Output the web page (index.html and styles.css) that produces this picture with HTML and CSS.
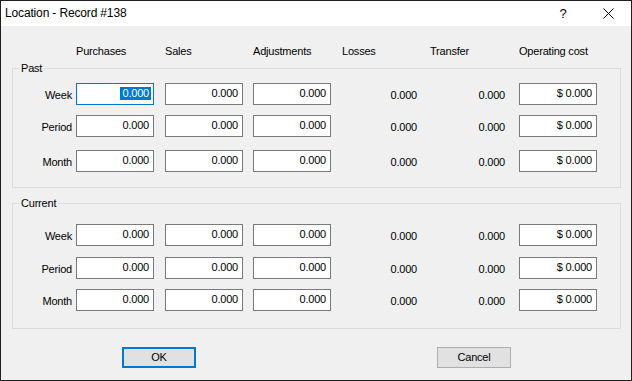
FILE: index.html
```html
<!DOCTYPE html>
<html>
<head>
<meta charset="utf-8">
<title>Location - Record #138</title>
<link rel="stylesheet" href="styles.css">
</head>
<body>
<div class="window">
  <div class="titlebar">
    <span class="title">Location - Record #138</span>
    <div class="caps">
      <span class="cap help">?</span>
      <span class="cap close"><svg width="11" height="11" viewBox="0 0 11 11"><path d="M0.5 0.5 L10.5 10.5 M10.5 0.5 L0.5 10.5" stroke="#000" stroke-width="1" fill="none"/></svg></span>
    </div>
  </div>
  <div class="content">
    <div class="cols headers">
      <span></span>
      <span class="hdr">Purchases</span>
      <span class="hdr">Sales</span>
      <span class="hdr">Adjustments</span>
      <span class="hdr">Losses</span>
      <span class="hdr">Transfer</span>
      <span class="hdr">Operating cost</span>
    </div>

    <fieldset class="group past">
      <legend>Past</legend>
      <div class="cols rows">
        <span class="lbl">Week</span>
        <div class="edit focus"><span class="sel">0.000</span></div>
        <div class="edit">0.000</div>
        <div class="edit">0.000</div>
        <span class="val">0.000</span>
        <span class="val">0.000</span>
        <div class="edit">$ 0.000</div>

        <span class="lbl">Period</span>
        <div class="edit">0.000</div>
        <div class="edit">0.000</div>
        <div class="edit">0.000</div>
        <span class="val">0.000</span>
        <span class="val">0.000</span>
        <div class="edit">$ 0.000</div>

        <span class="lbl">Month</span>
        <div class="edit">0.000</div>
        <div class="edit">0.000</div>
        <div class="edit">0.000</div>
        <span class="val">0.000</span>
        <span class="val">0.000</span>
        <div class="edit">$ 0.000</div>
      </div>
    </fieldset>

    <fieldset class="group current">
      <legend>Current</legend>
      <div class="cols rows">
        <span class="lbl">Week</span>
        <div class="edit">0.000</div>
        <div class="edit">0.000</div>
        <div class="edit">0.000</div>
        <span class="val">0.000</span>
        <span class="val">0.000</span>
        <div class="edit">$ 0.000</div>

        <span class="lbl">Period</span>
        <div class="edit">0.000</div>
        <div class="edit">0.000</div>
        <div class="edit">0.000</div>
        <span class="val">0.000</span>
        <span class="val">0.000</span>
        <div class="edit">$ 0.000</div>

        <span class="lbl">Month</span>
        <div class="edit">0.000</div>
        <div class="edit">0.000</div>
        <div class="edit">0.000</div>
        <span class="val">0.000</span>
        <span class="val">0.000</span>
        <div class="edit">$ 0.000</div>
      </div>
    </fieldset>

    <div class="buttons">
      <button class="btn default">OK</button>
      <button class="btn">Cancel</button>
    </div>
  </div>
</div>
</body>
</html>
```

FILE: styles.css
```css
* { box-sizing: border-box; }
html, body { margin: 0; padding: 0; }
body {
  width: 632px;
  height: 381px;
  overflow: hidden;
  background: #f0f0f0;
  font-family: "Liberation Sans", Arial, sans-serif;
  font-size: 11px;
  line-height: 13px;
  letter-spacing: -0.2px;
  color: #000;
}
.window {
  width: 632px;
  height: 381px;
  border: 1px solid #1f1f1f;
  background: #f0f0f0;
  display: flex;
  flex-direction: column;
}
.titlebar {
  height: 25px;
  flex-shrink: 0;
  background: #fff;
  display: flex;
  justify-content: space-between;
}
.title {
  font-size: 12px;
  line-height: 15px;
  letter-spacing: -0.15px;
  padding: 5px 0 0 4px;
}
.caps { display: flex; }
.cap {
  width: 46px;
  display: flex;
  align-items: center;
  justify-content: center;
}
.help {
  font-size: 13px;
  line-height: 15px;
  padding-left: 2px;
}
.close svg { display: block; }
.content {
  flex: 1;
  display: flex;
  flex-direction: column;
  padding: 0 10px 0 11px;
}
.cols {
  display: grid;
  grid-template-columns: 57px 89px 88px 89px 88px 89px 78px;
}
.headers {
  margin-top: 19px;
  padding-left: 7px;
}
.group {
  margin: 4px 0 0;
  border: 1px solid #dcdcdc;
  padding: 8px 6px 15px;
  min-inline-size: 0;
}
.group legend {
  padding: 0 2px;
  line-height: 13px;
}
.past .rows { grid-template-rows: 32px 35px 22px; }
.current { margin-top: 9px; padding-top: 14px; padding-bottom: 17px; }
.current .rows { grid-template-rows: 33px 32px 22px; }
.lbl {
  align-self: start;
  text-align: right;
  padding: 6px 4px 0 0;
}
.val {
  align-self: start;
  text-align: right;
  padding: 6px 3px 0 0;
  width: 78px;
}
.edit {
  align-self: start;
  width: 78px;
  height: 22px;
  background: #fff;
  border: 1px solid #7a7a7a;
  text-align: right;
  padding: 3px 4px 0 0;
  white-space: nowrap;
}
.edit.focus { border-color: #0078d7; }
.sel {
  background: #0078d7;
  color: #fff;
  padding: 0 2px 1px 2px;
  margin-right: -2px;
}
.buttons {
  margin-top: 18px;
  display: flex;
  justify-content: space-between;
  padding: 0 110px;
}
.btn {
  width: 74px;
  height: 21px;
  background: #e1e1e1;
  border: 1px solid #adadad;
  font-family: "Liberation Sans", Arial, sans-serif;
  font-size: 11px;
  line-height: 13px;
  letter-spacing: -0.2px;
  color: #000;
  padding: 0;
  margin: 0;
}
.btn.default { border: 2px solid #0078d7; }
```
